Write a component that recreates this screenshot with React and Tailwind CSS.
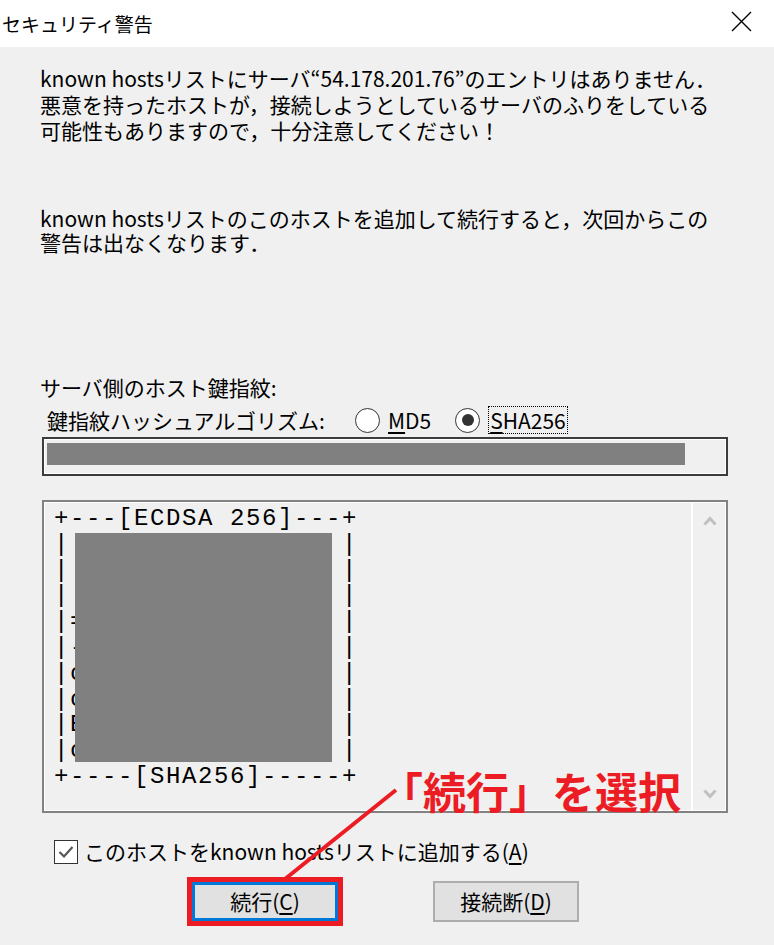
import React from "react";

const jp = { fontFamily: '"Noto Sans CJK JP", "Noto Sans", sans-serif' };

function Radio({ checked }) {
  return (
    <span className="w-[25px] h-[25px] rounded-full border-[1.5px] border-[#333333] bg-white flex items-center justify-center shrink-0">
      {checked && <span className="w-[12px] h-[12px] rounded-full bg-[#333333]" />}
    </span>
  );
}

function Line({ children, h }) {
  return (
    <div className={h === 24 ? "h-[24px] flex items-center whitespace-nowrap" : "h-[26px] flex items-center whitespace-nowrap"}>
      <span className="leading-[21px]">{children}</span>
    </div>
  );
}

export default function App() {
  const inner = ["", "", "", "=", "-", "o", "o", "E", "o"];
  const art = [
    "+---[ECDSA 256]---+",
    ...inner.map((s) => "|" + s.padEnd(17, " ") + "|"),
    "+----[SHA256]-----+",
  ].join("\n");

  return (
    <div className="relative w-[774px] h-[945px] bg-[#f0f0f0] overflow-hidden text-black" style={jp}>
      {/* title bar */}
      <div className="h-[47px] bg-white flex items-center justify-between pl-[2px] pr-[22px]">
        <span className="text-[19px] leading-none">セキュリティ警告</span>
        <svg width="21" height="21" viewBox="0 0 21 21" className="mt-[-4px]">
          <path d="M1 1 L20 20 M20 1 L1 20" stroke="#000" strokeWidth="1.4" />
        </svg>
      </div>

      <div className="flex flex-col pl-[40px] text-[21px]">
        <div className="mt-[18px]">
          <Line>known hostsリストにサーバ“54.178.201.76”のエントリはありません．</Line>
          <Line>悪意を持ったホストが，接続しようとしているサーバのふりをしている</Line>
          <Line>可能性もありますので，十分注意してください！</Line>
        </div>

        <div className="mt-[63px]">
          <Line h={24}>known hostsリストのこのホストを追加して続行すると，次回からこの</Line>
          <Line h={24}>警告は出なくなります．</Line>
        </div>

        <div className="mt-[120px]">
          <Line>サーバ側のホスト鍵指紋:</Line>
        </div>

        <div className="mt-[6px] h-[28px] flex items-center pl-[7px]">
          <span className="w-[308px] whitespace-nowrap leading-[21px]">鍵指紋ハッシュアルゴリズム:</span>
          <Radio checked={false} />
          <span className="ml-[8px] leading-[21px]">
            <span className="underline underline-offset-[3px]">M</span>D5
          </span>
          <span className="ml-[24px]">
            <Radio checked />
          </span>
          <span className="ml-[8px] h-[28px] px-[1px] flex items-center border border-dotted border-black leading-[21px]">
            <span className="underline underline-offset-[3px]">S</span>HA256
          </span>
        </div>

        {/* fingerprint box */}
        <div className="mt-[3px] ml-[2px] w-[686px] h-[39px] border-2 border-[#3c3c3c] shadow-[inset_0_0_0_1px_#ffffff] pl-[3px] pt-[4px]">
          <div className="w-[638px] h-[22px] bg-[#808080]" />
        </div>

        {/* randomart box */}
        <div className="relative mt-[24px] ml-[2px] w-[686px] h-[313px] border-2 border-[#828282] shadow-[inset_0_0_0_1px_#ffffff] flex">
          <pre
            className="flex-1 pl-[10px] pt-[4px] text-[24px] leading-[25.8px] tracking-[1.6px] whitespace-pre"
            style={{ fontFamily: '"Liberation Mono", "DejaVu Sans Mono", monospace' }}
          >
            {art}
          </pre>
          <div className="w-[35px] border-l-2 border-white flex flex-col items-center justify-between pt-[14px] pb-[12px]">
            <svg width="14" height="10" viewBox="0 0 14 10">
              <polyline points="1.5,8.5 7,2.5 12.5,8.5" fill="none" stroke="#c0c0c0" strokeWidth="3" />
            </svg>
            <svg width="14" height="10" viewBox="0 0 14 10">
              <polyline points="1.5,1.5 7,7.5 12.5,1.5" fill="none" stroke="#c0c0c0" strokeWidth="3" />
            </svg>
          </div>
          <div className="absolute left-[31px] top-[31px] w-[257px] h-[229px] bg-[#808080]" />
        </div>

        {/* checkbox */}
        <div className="mt-[26px] ml-[14px] h-[25px] flex items-center">
          <span className="w-[24px] h-[24px] border-[1.5px] border-[#333333] bg-white flex items-center justify-center">
            <svg width="18" height="16" viewBox="0 0 18 16">
              <polyline points="2.5,8 7,12.5 15.5,3" fill="none" stroke="#555555" strokeWidth="2.2" />
            </svg>
          </span>
          <span className="ml-[6px] leading-[21px] whitespace-nowrap">
            このホストをknown hostsリストに追加する(<span className="underline underline-offset-[3px]">A</span>)
          </span>
        </div>

        {/* buttons */}
        <div className="mt-[13px] flex items-center">
          <div className="ml-[147px] border-[5px] border-[#ec1c24]">
            <button className="w-[146px] h-[39px] bg-[#e1e1e1] border-[3px] border-[#0078d7] flex items-center justify-center text-[21px] leading-[21px]" style={jp}>
              続行(<span className="underline underline-offset-[3px]">C</span>)
            </button>
          </div>
          <button className="ml-[90px] w-[146px] h-[41px] bg-[#e1e1e1] border-2 border-[#adadad] flex items-center justify-center text-[21px] leading-[21px]" style={jp}>
            接続断(<span className="underline underline-offset-[3px]">D</span>)
          </button>
        </div>
      </div>

      {/* annotation overlay */}
      <svg className="absolute left-0 top-0 pointer-events-none" width="774" height="945">
        <line x1="396" y1="790" x2="285" y2="879" stroke="#ec1c24" strokeWidth="4" />
      </svg>
      <div className="absolute left-[380px] top-[769px] text-[43px] font-bold leading-none text-[#ec1c24] whitespace-nowrap" style={jp}>
        「続行」を選択
      </div>
    </div>
  );
}
